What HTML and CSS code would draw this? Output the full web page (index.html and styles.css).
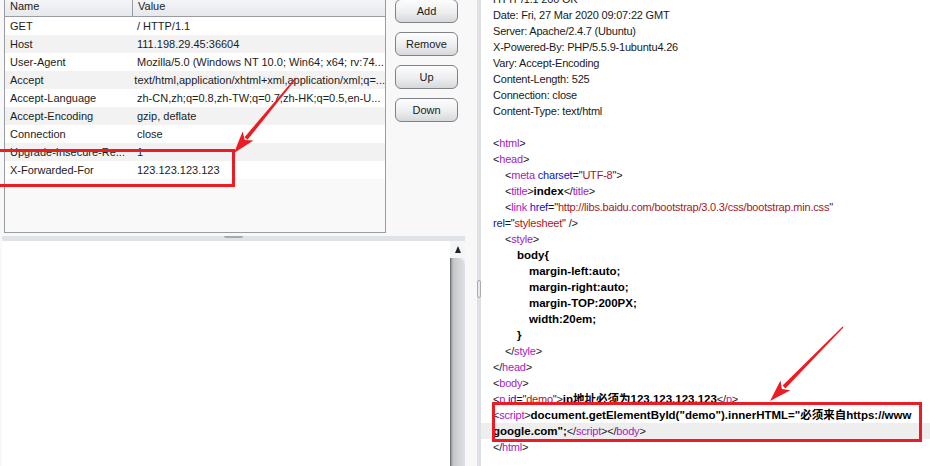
FILE: index.html
```html
<!DOCTYPE html>
<html>
<head>
	<meta charset="utf-8">
	<title>Repeater</title>
	<link rel="stylesheet" href="styles.css">
</head>
<body>
	<div class="app">
		<div class="left">
			<div class="top">
				<div class="table">
					<div class="thead">
						<div class="th name">Name</div>
						<div class="th">Value</div>
					</div>
					<div class="row"><p class="name">GET</p><p>/ HTTP/1.1</p></div>
					<div class="row"><p class="name">Host</p><p>111.198.29.45:36604</p></div>
					<div class="row"><p class="name">User-Agent</p><p>Mozilla/5.0 (Windows NT 10.0; Win64; x64; rv:74...</p></div>
					<div class="row"><p class="name">Accept</p><p>text/html,application/xhtml+xml,application/xml;q=...</p></div>
					<div class="row"><p class="name">Accept-Language</p><p>zh-CN,zh;q=0.8,zh-TW;q=0.7,zh-HK;q=0.5,en-U...</p></div>
					<div class="row"><p class="name">Accept-Encoding</p><p>gzip, deflate</p></div>
					<div class="row"><p class="name">Connection</p><p>close</p></div>
					<div class="row"><p class="name">Upgrade-Insecure-Re...</p><p>1</p></div>
					<div class="row"><p class="name">X-Forwarded-For</p><p>123.123.123.123</p></div>
				</div>
				<div class="buttons">
					<button class="btn">Add</button>
					<button class="btn">Remove</button>
					<button class="btn">Up</button>
					<button class="btn">Down</button>
				</div>
			</div>
			<div class="hsplit"><span class="grip"></span></div>
			<div class="bottom">
				<div class="editor"></div>
				<div class="scrollbar">
					<div class="arrow-up"></div>
					<div class="thumb"></div>
				</div>
			</div>
		</div>

		<div class="vsplit"><span class="grip"></span></div>

		<div class="right">
			<div class="code">
				<div class="ln">HTTP/1.1 200 OK</div>
				<div class="ln">Date: Fri, 27 Mar 2020 09:07:22 GMT</div>
				<div class="ln">Server: Apache/2.4.7 (Ubuntu)</div>
				<div class="ln">X-Powered-By: PHP/5.5.9-1ubuntu4.26</div>
				<div class="ln">Vary: Accept-Encoding</div>
				<div class="ln">Content-Length: 525</div>
				<div class="ln">Connection: close</div>
				<div class="ln">Content-Type: text/html</div>
				<div class="ln"></div>
				<div class="ln">&lt;<span class="t">html</span>&gt;</div>
				<div class="ln">&lt;<span class="t">head</span>&gt;</div>
				<div class="ln i1">&lt;<span class="t">meta</span> <span class="a">charset</span>="<span class="v">UTF-8</span>"&gt;</div>
				<div class="ln i1">&lt;<span class="t">title</span>&gt;<b>index</b>&lt;/<span class="t">title</span>&gt;</div>
				<div class="ln i1">&lt;<span class="t">link</span> <span class="a">href</span>="<span class="v">http://libs.baidu.com/bootstrap/3.0.3/css/bootstrap.min.css</span>"</div>
				<div class="ln"><span class="a">rel</span>="<span class="v">stylesheet</span>" /&gt;</div>
				<div class="ln i1">&lt;<span class="t">style</span>&gt;</div>
				<div class="ln i2"><b>body{</b></div>
				<div class="ln i3"><b>margin-left:auto;</b></div>
				<div class="ln i3"><b>margin-right:auto;</b></div>
				<div class="ln i3"><b>margin-TOP:200PX;</b></div>
				<div class="ln i3"><b>width:20em;</b></div>
				<div class="ln i2"><b>}</b></div>
				<div class="ln i1">&lt;/<span class="t">style</span>&gt;</div>
				<div class="ln">&lt;/<span class="t">head</span>&gt;</div>
				<div class="ln">&lt;<span class="t">body</span>&gt;</div>
				<div class="ln">&lt;<span class="t">p</span> <span class="a">id</span>="<span class="v">demo</span>"&gt;<b>ip地址必须为123.123.123.123</b>&lt;/<span class="t">p</span>&gt;</div>
				<div class="ln">&lt;<span class="t">script</span>&gt;<b>document.getElementById("demo").innerHTML="必须来自https://www</b></div>
				<div class="ln current"><b>google.com";</b>&lt;/<span class="t">script</span>&gt;&lt;/<span class="t">body</span>&gt;</div>
				<div class="ln">&lt;/<span class="t">html</span>&gt;</div>
			</div>
		</div>

		<!-- annotations drawn on top of the screenshot -->
		<div class="mark mark-left"></div>
		<div class="mark mark-right"></div>
		<svg class="arrows" width="930" height="466" viewBox="0 0 930 466">
			<polygon points="296.5,78.4 247.5,139.8 244.5,137.2 295.5,77.6"/>
			<polygon points="234,153 253.4,140.5 244.8,139.9 242.6,131.5"/>
			<polygon points="843.4,327.4 785.4,388.4 782.6,385.6 842.6,326.6"/>
			<polygon points="770,401 790.4,390.2 781.9,388.9 780.5,380.4"/>
		</svg>
	</div>
</body>
</html>
```

FILE: styles.css
```css
* {
	margin: 0;
	box-sizing: border-box;
}

body {
	font-family: "Liberation Sans", Arial, "Noto Sans CJK SC", sans-serif;
	font-size: 11px;
	color: #1c1c1c;
	background: #f8f8f8;
}

.app {
	position: relative;
	display: flex;
	width: 930px;
	height: 466px;
	overflow: hidden;
}

/* left: header table + buttons, empty editor below */
.left {
	display: flex;
	flex-direction: column;
	width: 477px;
}

.top {
	display: flex;
	height: 236px;
	padding-left: 4px;
}

.table {
	width: 382px;
	height: 238px;
	margin-top: -5px;
	border: 1px solid #9a9ca3;
	background: #f9f9f9;
}

.thead {
	display: flex;
	height: 21px;
	border-bottom: 1px solid #9a9ca3;
	background: linear-gradient(#f7f8fa, #e6e8ec);
}

.th {
	padding: 4px 0 0 5px;
	color: #222;
	font-size: 11px;
}

.th.name {
	width: 128px;
	border-right: 1px solid #9a9ca3;
}

.row {
	display: flex;
	height: 18px;
	line-height: 18px;
	background: #fff;
	white-space: nowrap;
}

.row:nth-of-type(odd) {
	background: #f2f2f2;
}

.row p {
	padding-left: 4px;
}

.row p.name {
	width: 128px;
	padding-left: 5px;
}

.buttons {
	display: flex;
	flex-direction: column;
	gap: 9px;
	margin: -1px 0 0 9px;
}

.btn {
	width: 63px;
	height: 24px;
	padding: 0;
	border: 1px solid #7f8287;
	border-radius: 6px;
	background: linear-gradient(#fdfdfd, #eceef0 55%, #d6d8db);
	font-family: "Liberation Sans", Arial, sans-serif;
	font-size: 11px;
	color: #1a1a1a;
}

.hsplit {
	display: flex;
	justify-content: center;
	height: 5px;
	margin-left: 2px;
	width: 463px;
	background: #dfe2e7;
}

.hsplit .grip {
	width: 19px;
	height: 2px;
	border-radius: 0 0 3px 3px;
	background: #a6a9ae;
}

.bottom {
	display: flex;
	flex: 1;
	padding-left: 2px;
}

.editor {
	width: 448px;
	background: #fff;
}

.scrollbar {
	display: flex;
	flex-direction: column;
	width: 15px;
	background: #eef0f2;
}

.arrow-up {
	display: flex;
	justify-content: center;
	align-items: center;
	height: 17px;
	background: #f4f5f7;
}

.arrow-up::before {
	content: "";
	border-left: 3.5px solid transparent;
	border-right: 3.5px solid transparent;
	border-bottom: 7px solid #222;
}

.thumb {
	flex: 1;
	border-radius: 0 7px 0 0;
	background: linear-gradient(to right, #5a5b5e 0, #8d8f93 1px, #c3c5c9 3px, #d3d5d9 60%, #dcdee2 100%);
}

.vsplit {
	width: 4px;
	padding-top: 280px;
	background: #dde0e5;
}

.vsplit .grip {
	display: block;
	width: 4px;
	height: 18px;
	border: 1px solid #a9acb1;
	border-radius: 2px;
	background: #e6e8eb;
}

/* right: response text */
.right {
	flex: 1;
	background: #fff;
	letter-spacing: -0.2px;
}

.code {
	margin-top: -9px;
}

.ln {
	height: 16px;
	line-height: 16px;
	padding-left: 12px;
	white-space: pre;
	color: #1a1a1a;
}

.ln b {
	font-size: 11.5px;
	letter-spacing: 0;
	color: #000;
}

.ln.i1 { padding-left: 24px; }
.ln.i2 { padding-left: 36px; }
.ln.i3 { padding-left: 48px; }

.ln.current {
	background: #eeeeee;
}

.t { color: #a21bc2; }
.a { color: #1212c4; }
.v { color: #a8161b; }

/* red annotations */
.mark {
	position: absolute;
	border: 3px solid #ec1c24;
}

.mark-left {
	left: -10px;
	top: 149px;
	width: 245px;
	height: 38px;
}

.mark-right {
	left: 492px;
	top: 402px;
	width: 430px;
	height: 40px;
}

.arrows {
	position: absolute;
	left: 0;
	top: 0;
	fill: #ec1c24;
}
```
